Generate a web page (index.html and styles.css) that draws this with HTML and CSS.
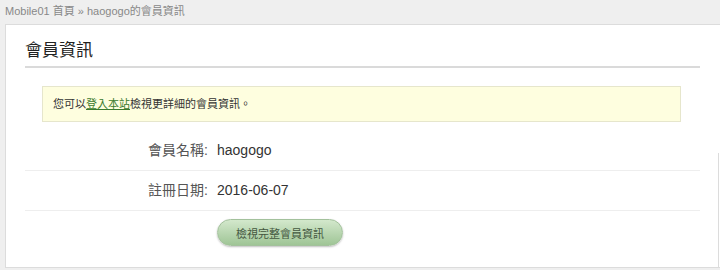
FILE: index.html
```html
<!DOCTYPE html>
<html lang="zh-Hant">
<head>
  <meta charset="UTF-8">
  <meta name="viewport" content="width=device-width, initial-scale=1.0">
  <title>haogogo的會員資訊</title>
  <link rel="stylesheet" href="styles.css">
</head>
<body>
  <div class="breadcrumb">
    <a href="#">Mobile01 首頁</a> » haogogo的會員資訊
  </div>

  <div class="card">
    <h2 class="card-title">會員資訊</h2>

    <div class="notice">
      您可以<a href="#">登入本站</a>檢視更詳細的會員資訊。
    </div>

    <div class="info">
      <div class="info-row">
        <span class="info-label">會員名稱:</span>
        <span class="info-value">haogogo</span>
      </div>
      <div class="info-row">
        <span class="info-label">註冊日期:</span>
        <span class="info-value">2016-06-07</span>
      </div>
      <div class="info-actions">
        <button class="btn-green">檢視完整會員資訊</button>
      </div>
    </div>
  </div>
</body>
</html>
```

FILE: styles.css
```css
body {
  margin: 0;
  background-color: #efefef;
  font-family: Arial, "Liberation Sans", "Noto Sans CJK TC", sans-serif;
  color: #333;
}

.breadcrumb {
  height: 24px;
  line-height: 22px;
  padding-left: 5px;
  font-size: 11px;
  color: #888;
}

.breadcrumb a {
  color: #888;
  text-decoration: none;
}

.card {
  position: relative;
  margin-left: 5px;
  height: 244px;
  background: #fff;
  border: 1px solid #dcdcdc;
  border-right: none;
  padding: 14px 20px 0 19px;
  box-sizing: border-box;
}

/* right edge only shows along the lower part */
.card::after {
  content: "";
  position: absolute;
  right: 1px;
  top: 128px;
  bottom: 0;
  width: 1px;
  background: #dcdcdc;
}

.card-title {
  margin: 0;
  font-size: 17px;
  font-weight: normal;
  line-height: 24px;
  padding-bottom: 3px;
  border-bottom: 2px solid #dadada;
  color: #222;
}

.notice {
  margin: 18px 19px 0 17px;
  height: 36px;
  box-sizing: border-box;
  line-height: 34px;
  padding-left: 10px;
  background: #fefedf;
  border: 1px solid #e6e6cc;
  font-size: 11px;
  color: #333;
}

.notice a {
  color: #3b7a2e;
}

.info {
  margin-top: 9px;
}

.info-row {
  display: grid;
  grid-template-columns: 183px 1fr;
  column-gap: 9px;
  height: 39px;
  line-height: 39px;
  border-bottom: 1px solid #eeeeee;
  font-size: 14px;
}

.info-label {
  text-align: right;
  color: #555;
}

.info-value {
  color: #333;
}

.info-actions {
  padding: 8px 0 0 192px;
}

.btn-green {
  width: 126px;
  height: 27px;
  border: 1px solid #a3c19c;
  border-radius: 14px;
  background: linear-gradient(#d3e8cc, #9fc596);
  box-shadow: 0 1px 2px rgba(0, 0, 0, 0.25);
  font-family: inherit;
  font-size: 11px;
  color: #44573f;
  cursor: pointer;
}

.btn-green:hover {
  background: linear-gradient(#bddbb4, #8ab880);
}
```
